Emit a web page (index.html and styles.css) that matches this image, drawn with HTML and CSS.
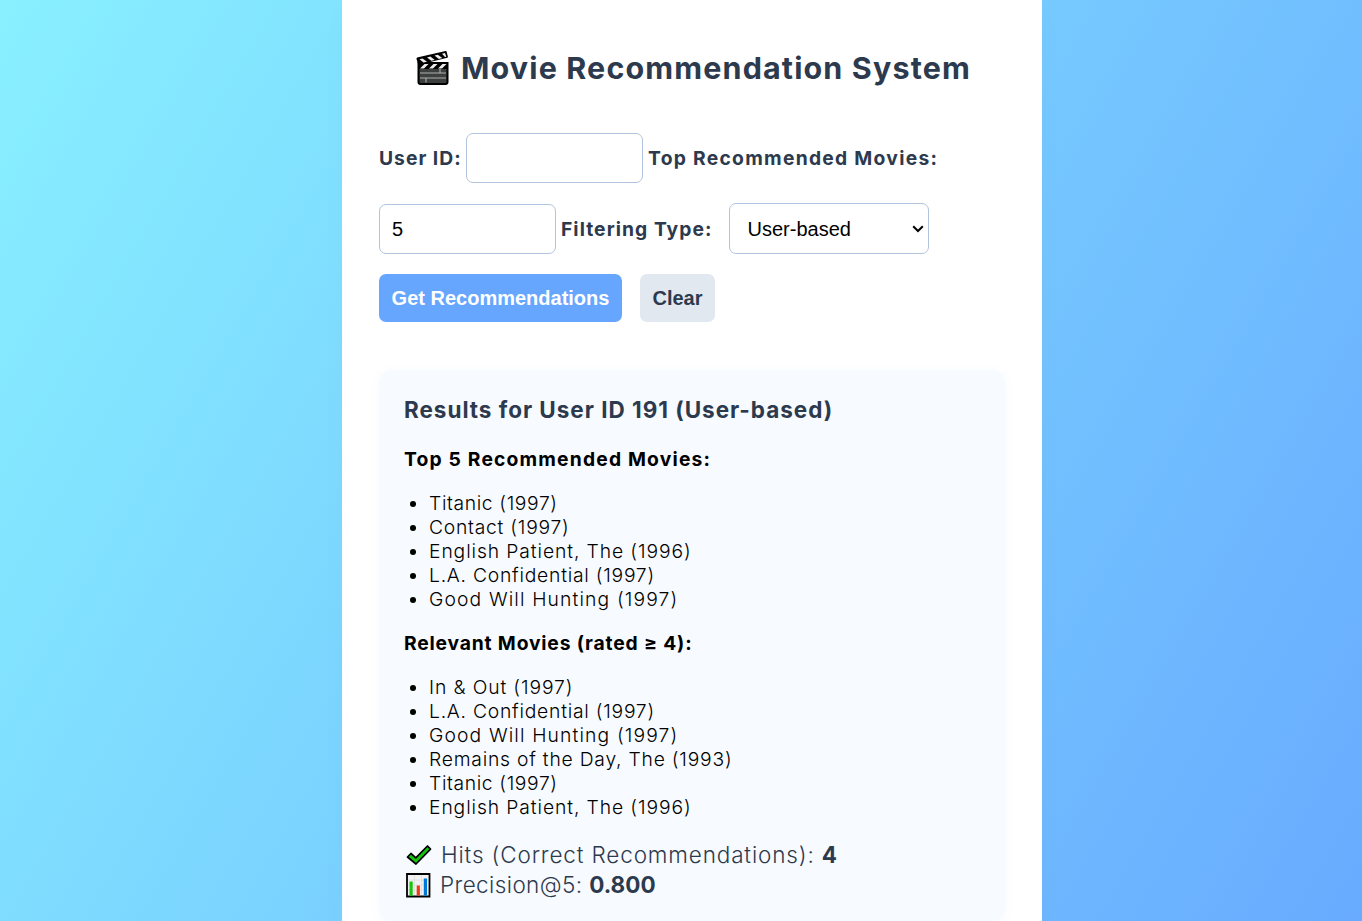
FILE: index.html
```html
<!DOCTYPE html>
<html lang="en">
<head>
<meta charset="utf-8">
<title>Movie Recommendation System</title>
<link rel="stylesheet" href="styles.css">
</head>
<body>
<main class="container">
  <h1 class="title">
    <svg class="clapper" viewBox="0 0 34 36" aria-hidden="true">
      <path d="M2.500 13h29v19q0 2-2 2H4.500q-2 0-2-2z" fill="#3b3f3e" stroke="#000" stroke-width="2"/>
      <path d="M1.300 8.500 29.800 2l1.200 5L3 14z" fill="#000" stroke="#000" stroke-width="1.800" stroke-linejoin="round"/>
      <path d="M3.500 9.200l3-.8 4.500 3.300-3.500.9zM11 7.400l3.300-.8 4.500 3.300-3.500.9zM18.500 5.600l3.300-.8 4.500 3.300-3.500.9zM26 3.800l3-.7 1.300 3.600-1.300.3z" fill="#eee"/>
      <path d="M3 13h28v6H3z" fill="#000"/>
      <path d="M4 18.500l4.500-4.500h4l-4.500 4.500zM13 18.500l4.500-4.500h4L17 18.500zM22 18.500l4.500-4.500h4L26 18.500z" fill="#eee"/>
      <path d="M4 23h26M4 28h26M24 19v4M10 28v4.500" stroke="#b0b0b0" stroke-width="1.100"/>
    </svg>
    <span class="title-text">Movie Recommendation System</span>
  </h1>
  <form class="form">
    <div class="row">
      <label class="label l-user" for="uid">User ID:</label>
      <input class="input" id="uid" type="text">
      <label class="label l-top" for="top">Top Recommended Movies:</label>
    </div>
    <div class="row">
      <input class="input" id="top" type="text" value="5">
      <label class="label l-filter" for="kind">Filtering Type:</label>
      <div class="select-wrap">
        <select class="select" id="kind"><option>User-based</option></select>
        <svg class="chevron" viewBox="0 0 12 8" aria-hidden="true"><path d="M1.200 1.200 6 6l4.800-4.800" fill="none" stroke="#000" stroke-width="2"/></svg>
      </div>
    </div>
    <div class="actions">
      <button class="btn primary" type="button">Get Recommendations</button>
      <button class="btn" type="button">Clear</button>
    </div>
  </form>
  <section class="results">
    <h2 class="heading">Results for User ID 191 (User-based)</h2>
    <h3 class="sub">Top 5 Recommended Movies:</h3>
    <ul class="list">
      <li class="titanic">Titanic (1997)</li>
      <li class="contact">Contact (1997)</li>
      <li class="patient">English Patient, The (1996)</li>
      <li class="confidential">L.A. Confidential (1997)</li>
      <li class="hunting">Good Will Hunting (1997)</li>
    </ul>
    <h3 class="sub relevant">Relevant Movies (rated ≥ 4):</h3>
    <ul class="list">
      <li class="in-out">In &amp; Out (1997)</li>
      <li class="confidential">L.A. Confidential (1997)</li>
      <li class="hunting">Good Will Hunting (1997)</li>
      <li class="remains">Remains of the Day, The (1993)</li>
      <li class="titanic">Titanic (1997)</li>
      <li class="patient">English Patient, The (1996)</li>
    </ul>
    <div class="metric">
      <svg class="icon" viewBox="0 0 26 26" aria-hidden="true"><path d="M1.500 15l3.500-3.500 4.800 4.300L21.500 4l3 3.200L10 22z" fill="#16c60c" stroke="#000" stroke-width="1.700" stroke-linejoin="round"/></svg>
      <span class="hits">Hits (Correct Recommendations): <b>4</b></span>
    </div>
    <div class="metric">
      <svg class="icon chart" viewBox="0 0 26 26" aria-hidden="true"><path d="M2 2h22.500v22.500H2z" fill="#f2f2f2" stroke="#000" stroke-width="1.800"/><path d="M3 8h20M3 13h20M3 18h20M9.500 3v20M16.500 3v20" stroke="#ddd" stroke-width=".8"/><path d="M4.500 9.500h3.200v14H4.500z" fill="#16c60c"/><path d="M11.700 13.500h3.200v10h-3.200z" fill="#f03a17"/><path d="M18.800 6.500H22v17h-3.200z" fill="#0078d7"/></svg>
      <span class="precision">Precision@5: <b>0.800</b></span>
    </div>
  </section>
</main>
</body>
</html>
```
FILE: styles.css
```css
* { box-sizing: border-box; }
body {
  margin: 0;
  height: 921px;
  overflow: hidden;
  background: linear-gradient(120deg, #88f0ff 0%, #68abff 100%);
  font-family: Inter, "Open Sans", sans-serif;
  font-size: 19.300px;
  color: #000;
}
.container {
  width: 700px;
  height: 921px;
  margin: 0 auto 0 342px;
  padding: 46px 37px 0;
  background: #fff;
  box-shadow: 0 8px 32px rgba(60, 60, 120, .02);
}
.title {
  display: flex;
  align-items: center;
  height: 42px;
  margin: 0 0 45px 37px;
  color: #2d3a4e;
  font-size: 30.500px;
  font-weight: 700;
  letter-spacing: 1.130px;
  white-space: nowrap;
}
.clapper { width: 34px; height: 36px; margin: 2px 11px 0 0; }
.row { display: flex; align-items: center; height: 50px; margin-bottom: 21px; }
.label { color: #2d3a4e; font-weight: 650; white-space: nowrap; flex: none; }
.l-user { width: 87px; letter-spacing: 1px; }
.l-top { letter-spacing: 1.270px; }
.l-filter { width: 168px; letter-spacing: 1.050px; }
.input, .select {
  height: 50px;
  width: 177px;
  flex: none;
  margin: 0;
  padding: 0 12px;
  border: 1px solid #b0c4de;
  border-radius: 7px;
  background: #fff;
  color: #000;
  font: 20px "Liberation Sans", Arial, sans-serif;
}
.input { margin-right: 5px; }
.select-wrap { position: relative; height: 51px; margin-bottom: 1px; }
.select { width: 200px; height: 51px; padding: 0 0 0 17.500px; appearance: none; }
.chevron { position: absolute; right: 5px; top: 22px; width: 12px; height: 8px; pointer-events: none; }
.actions { display: flex; gap: 18px; margin-top: -1px; }
.btn {
  width: 75px;
  height: 48px;
  padding: 0;
  border: 0;
  border-radius: 7px;
  background: #e2e8f0;
  color: #2d3a4e;
  font: bold 20px "Liberation Sans", Arial, sans-serif;
  white-space: nowrap;
}
.primary { width: 243px; background: #66a6ff; color: #fff; }
.results {
  height: 551px;
  margin-top: 48px;
  padding: 25px;
  border-radius: 12px;
  background: #f7faff;
  box-shadow: 0 2px 12px rgba(102, 166, 255, .05);
}
.heading { margin: 0; height: 30px; font-size: 22.500px; font-weight: 650; line-height: 30px; letter-spacing: .970px; color: #2d3a4e; white-space: nowrap; }
.sub { margin: 22px 0 0; font-size: 19.300px; font-weight: 700; line-height: 24px; letter-spacing: 1.170px; white-space: nowrap; }
.relevant { margin-top: 20px; letter-spacing: .820px; }
.list { margin: 20px 0 0; padding-left: 25px; line-height: 24px; font-weight: 350; }
.list li { white-space: nowrap; }
.titanic { letter-spacing: .630px; }
.contact { letter-spacing: .760px; }
.patient { letter-spacing: .900px; }
.confidential { letter-spacing: .760px; }
.hunting { letter-spacing: 1.140px; }
.in-out { letter-spacing: .880px; }
.remains { letter-spacing: .780px; }
.metric { display: flex; align-items: center; height: 30px; font-size: 22.500px; font-weight: 300; color: #2d3a4e; white-space: nowrap; }
.list + .metric { margin-top: 20px; }
.icon { width: 26px; height: 26px; margin: 1px 9px 0 2px; }
.chart { margin: 2px 9px 0 1px; }
.hits { letter-spacing: .850px; }
.precision { letter-spacing: .400px; }
.metric b { font-weight: 750; letter-spacing: 0; }
```
